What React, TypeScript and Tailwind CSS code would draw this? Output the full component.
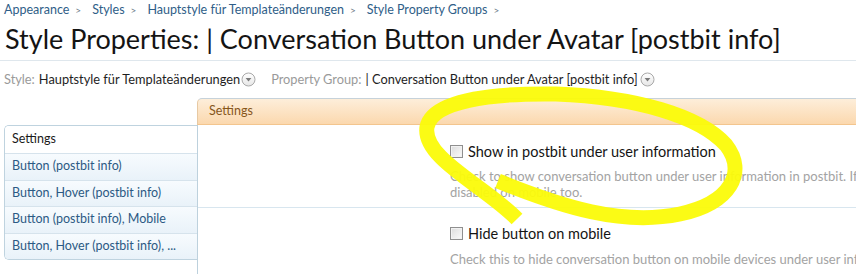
import React from 'react';

const crumbs = ['Appearance', 'Styles', 'Hauptstyle für Templateänderungen', 'Style Property Groups'];
const groups = ['Button (postbit info)', 'Button, Hover (postbit info)', 'Button (postbit info), Mobile', 'Button, Hover (postbit info), ...'];

const DropIcon = () => (
    <svg width="15" height="15" viewBox="0 0 15 15" className="shrink-0">
        <defs>
            <linearGradient id="dg" x1="0" y1="0" x2="0" y2="1">
                <stop offset="0" stopColor="#ffffff" />
                <stop offset="1" stopColor="#e6e6e6" />
            </linearGradient>
        </defs>
        <circle cx="7.5" cy="7.5" r="6.5" fill="url(#dg)" stroke="#a9a9a9" />
        <path d="M4.6 6 L10.4 6 L7.5 9.4 Z" fill="#7a7a7a" />
    </svg>
);

const Checkbox = () => (
    <span className="inline-block w-[13px] h-[13px] border border-[#8f8f8f] bg-gradient-to-br from-[#dcdcdc] to-[#fbfbfb] shadow-[inset_0_0_0_1px_#f2f2f2] shrink-0" />
);

export default function App() {
    return (
        <div className="relative w-[856px] h-[274px] overflow-hidden bg-white font-['Lato',sans-serif]">
            {/* breadcrumb */}
            <div className="h-[21px] pl-[4px] flex items-center text-[12.5px] whitespace-nowrap">
                {crumbs.map((c) => (
                    <span key={c} className="flex items-center">
                        <span className="text-[#2f5e88]">{c}</span>
                        <span className="text-[#6b7a88] text-[10px] ml-[6px] mr-[11px]">&gt;</span>
                    </span>
                ))}
            </div>

            <h1 className="h-[40px] pl-[5px] text-[27px] leading-[36px] text-[#141414] whitespace-nowrap border-b border-[#dfe7ed]">
                Style Properties: | Conversation Button under Avatar [postbit info]
            </h1>

            {/* filters */}
            <div className="h-[37px] pl-[4px] flex items-center text-[12.8px] whitespace-nowrap">
                <span className="text-[#9a9a9a]">Style:</span>
                <span className="text-[#1e1e1e] ml-[4px]">Hauptstyle für Templateänderungen</span>
                <span className="ml-[1px]"><DropIcon /></span>
                <span className="text-[#9a9a9a] ml-[15px]">Property Group:</span>
                <span className="text-[#1e1e1e] ml-[4px]">| Conversation Button under Avatar [postbit info]</span>
                <span className="ml-[2px]"><DropIcon /></span>
            </div>

            <div className="flex">
                {/* sidebar */}
                <div className="w-[193px] ml-[4px] pt-[27px] shrink-0">
                    <div className="border border-r-0 border-[#bfd3df] rounded-l-[5px] overflow-hidden text-[12.5px]">
                        <div className="h-[27px] flex items-center pl-[7px] text-[#1a1a1a] bg-white">Settings</div>
                        {groups.map((g) => (
                            <div key={g} className="h-[26.5px] flex items-center pl-[7px] text-[#2c5a84] border-t border-[#d6e3ec] bg-gradient-to-b from-[#f7fbfe] to-[#e9f2f9] whitespace-nowrap">
                                {g}
                            </div>
                        ))}
                    </div>
                </div>

                {/* main */}
                <div className="flex-1 min-w-0">
                    <div className="h-[27px] flex items-center pl-[11px] border-t border-l border-b border-t-[#c6d2da] border-l-[#e7c9a3] border-b-[#f3c58e] rounded-tl-[5px] bg-gradient-to-b from-[#fdeeda] to-[#fbd8ae] text-[12.5px] text-[#86561c]">
                        Settings
                    </div>
                    <div className="border-l border-[#bdd1dd] h-[160px]">
                        <div className="pl-[252px] pt-[16px] h-[83px] border-b border-[#d8e6ef]">
                            <label className="flex items-center gap-[5px] text-[14.5px] text-[#141414] whitespace-nowrap">
                                <Checkbox />
                                <span>Show in postbit under user information</span>
                            </label>
                            <p className="mt-[5px] text-[13px] leading-[16px] text-[#a3a3a3] whitespace-nowrap">
                                Check to show conversation button under user information in postbit. If enabled, the button will be
                                <br />
                                disabled on mobile too.
                            </p>
                        </div>
                        <div className="pl-[252px] pt-[15px]">
                            <label className="flex items-center gap-[5px] text-[14.5px] text-[#141414] whitespace-nowrap">
                                <Checkbox />
                                <span>Hide button on mobile</span>
                            </label>
                            <p className="mt-[6px] text-[13px] leading-[16px] text-[#a3a3a3] whitespace-nowrap">
                                Check this to hide conversation button on mobile devices under user information in postbit.
                            </p>
                        </div>
                    </div>
                </div>
            </div>

            {/* yellow hand-drawn marker over the page */}
            <svg className="absolute left-0 top-0 pointer-events-none" width="856" height="274" viewBox="0 0 856 274">
                <path
                    d="M517 219 C485 186 422 158 427 127 C432 101 490 93 556 94 C636 97 700 116 726 145 C747 172 731 203 680 214 C622 226 562 207 498 181"
                    fill="none"
                    stroke="#fbfb08"
                    strokeWidth="15"
                    strokeLinecap="butt"
                    strokeLinejoin="round"
                    opacity="0.95"
                />
            </svg>
        </div>
    );
}
